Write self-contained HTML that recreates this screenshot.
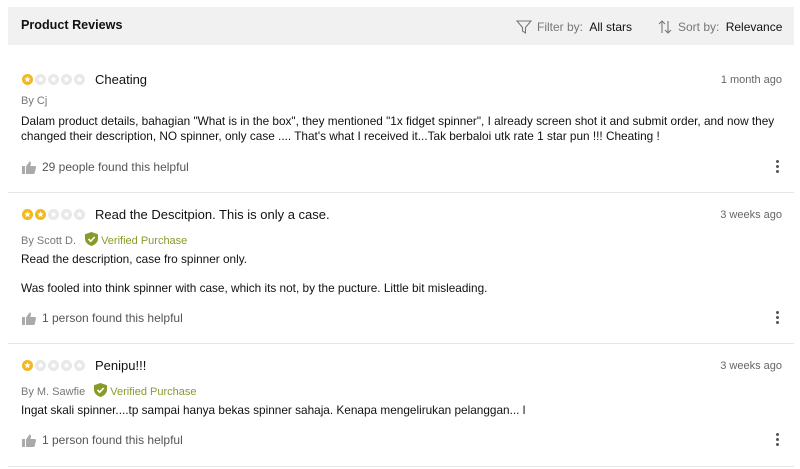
<!DOCTYPE html><html><head><style>
body{margin:0;width:800px;height:469px;background:#fff;font-family:"Liberation Sans",sans-serif;position:relative;overflow:hidden}
.a{position:absolute;white-space:nowrap}
.hdr{position:absolute;left:8px;top:7px;width:786px;height:38px;background:#f1f1f1}
.t{font-size:13px;color:#111}
.by{font-size:11px;color:#777}
.b{font-size:11.8px;color:#111}
.g{font-size:12px;color:#555}
.d{font-size:11px;color:#666;right:18px}
.sep{position:absolute;left:8px;width:786px;height:1px;background:#e6e6e6}
.vp{color:#8a9a2a}
.dots{position:absolute;left:776px;width:3px}
.dots i{display:block;width:3px;height:3px;border-radius:50%;background:#555;margin-bottom:2px}
</style></head><body>
<div class="hdr"></div>
<div class="a" style="left:21px;top:18px;font-size:12.6px;font-weight:bold;color:#111">Product Reviews</div>
<svg class="a" style="left:516px;top:19px" width="16" height="16" viewBox="0 0 16 16"><path d="M1 2h14L9.5 8.5V14L6.5 12V8.5Z" fill="none" stroke="#777" stroke-width="1.1"/></svg>
<div class="a" style="left:537px;top:20px;font-size:12px;color:#777">Filter by: <span style="color:#111;margin-left:3px">All stars</span></div>
<svg class="a" style="left:657px;top:19px" width="16" height="16" viewBox="0 0 16 16"><path d="M5 14V2M2 5l3-3 3 3M11 2v12M8 11l3 3 3-3" fill="none" stroke="#777" stroke-width="1.1"/></svg>
<div class="a" style="left:678px;top:20px;font-size:12px;color:#777">Sort by: <span style="color:#111;margin-left:3px">Relevance</span></div>

<svg width="0" height="0" style="position:absolute"><defs>
<g id="on"><circle cx="5.5" cy="5.5" r="5.5" fill="#f2b81d"/><path d="M5.5 2.3l.95 2 2.15.25-1.6 1.45.45 2.15-1.950-1.1-1.95 1.1.45-2.15-1.6-1.45 2.15-.25z" fill="#fff"/></g>
<g id="off"><circle cx="5.5" cy="5.5" r="5.5" fill="#e8e8e8"/><path d="M5.5 2.3l.95 2 2.15.25-1.6 1.45.45 2.15-1.95-1.1-1.95 1.1.45-2.15-1.6-1.45 2.15-.25z" fill="#fff"/></g>
<g id="th"><rect x="0" y="6" width="3" height="8" fill="#aaa"/><path d="M4 6.5L7.5 1.5c1 0 1.6.6 1.4 1.8L8.4 6h4.3c.9 0 1.5.8 1.3 1.6l-1.3 5.4c-.2.6-.7 1-1.3 1H4z" fill="#aaa"/></g>
<g id="sh"><path d="M6.5 0L13 2.3v4.4C13 10.3 10 12.6 6.5 14 3 12.6 0 10.3 0 6.7V2.3z" fill="#8a9a2a"/><path d="M3.5 7l2.2 2.2 4-4.2" fill="none" stroke="#fff" stroke-width="1.6"/></g>
</defs></svg>

<!-- review 1 -->
<svg class="a" style="left:22px;top:74px" width="64" height="11"><use href="#on"/><use href="#off" x="13"/><use href="#off" x="26"/><use href="#off" x="39"/><use href="#off" x="52"/></svg>
<div class="a t" style="left:95px;top:72px">Cheating</div>
<div class="a d" style="top:74px">1 month ago</div>
<div class="a by" style="left:21px;top:95px">By Cj</div>
<div class="a b" style="left:21px;top:114px;line-height:15px">Dalam product details, bahagian "What is in the box", they mentioned "1x fidget spinner", I already screen shot it and submit order, and now they<br>changed their description, NO spinner, only case .... That's what I received it...Tak berbaloi utk rate 1 star pun !!! Cheating !</div>
<svg class="a" style="left:22px;top:160px" width="15" height="15"><use href="#th"/></svg>
<div class="a g" style="left:42px;top:160px">29 people found this helpful</div>
<div class="dots" style="top:160px"><i></i><i></i><i></i></div>
<div class="sep" style="top:192px"></div>

<!-- review 2 -->
<svg class="a" style="left:22px;top:209px" width="64" height="11"><use href="#on"/><use href="#on" x="13"/><use href="#off" x="26"/><use href="#off" x="39"/><use href="#off" x="52"/></svg>
<div class="a t" style="left:95px;top:207px">Read the Descitpion. This is only a case.</div>
<div class="a d" style="top:209px">3 weeks ago</div>
<div class="a by" style="left:21px;top:232px">By Scott D. <svg style="margin:0 3px 0 6px;vertical-align:-2px" width="13" height="14"><use href="#sh"/></svg><span class="vp">Verified Purchase</span></div>
<div class="a b" style="left:21px;top:252px">Read the description, case fro spinner only.</div>
<div class="a b" style="left:21px;top:281px">Was fooled into think spinner with case, which its not, by the pucture. Little bit misleading.</div>
<svg class="a" style="left:22px;top:311px" width="15" height="15"><use href="#th"/></svg>
<div class="a g" style="left:42px;top:311px">1 person found this helpful</div>
<div class="dots" style="top:311px"><i></i><i></i><i></i></div>
<div class="sep" style="top:343px"></div>

<!-- review 3 -->
<svg class="a" style="left:22px;top:360px" width="64" height="11"><use href="#on"/><use href="#off" x="13"/><use href="#off" x="26"/><use href="#off" x="39"/><use href="#off" x="52"/></svg>
<div class="a t" style="left:95px;top:358px">Penipu!!!</div>
<div class="a d" style="top:360px">3 weeks ago</div>
<div class="a by" style="left:21px;top:383px">By M. Sawfie <svg style="margin:0 3px 0 6px;vertical-align:-2px" width="13" height="14"><use href="#sh"/></svg><span class="vp">Verified Purchase</span></div>
<div class="a b" style="left:21px;top:403px">Ingat skali spinner....tp sampai hanya bekas spinner sahaja. Kenapa mengelirukan pelanggan... l</div>
<svg class="a" style="left:22px;top:433px" width="15" height="15"><use href="#th"/></svg>
<div class="a g" style="left:42px;top:433px">1 person found this helpful</div>
<div class="dots" style="top:433px"><i></i><i></i><i></i></div>
<div class="sep" style="top:466px"></div>
</body></html>
